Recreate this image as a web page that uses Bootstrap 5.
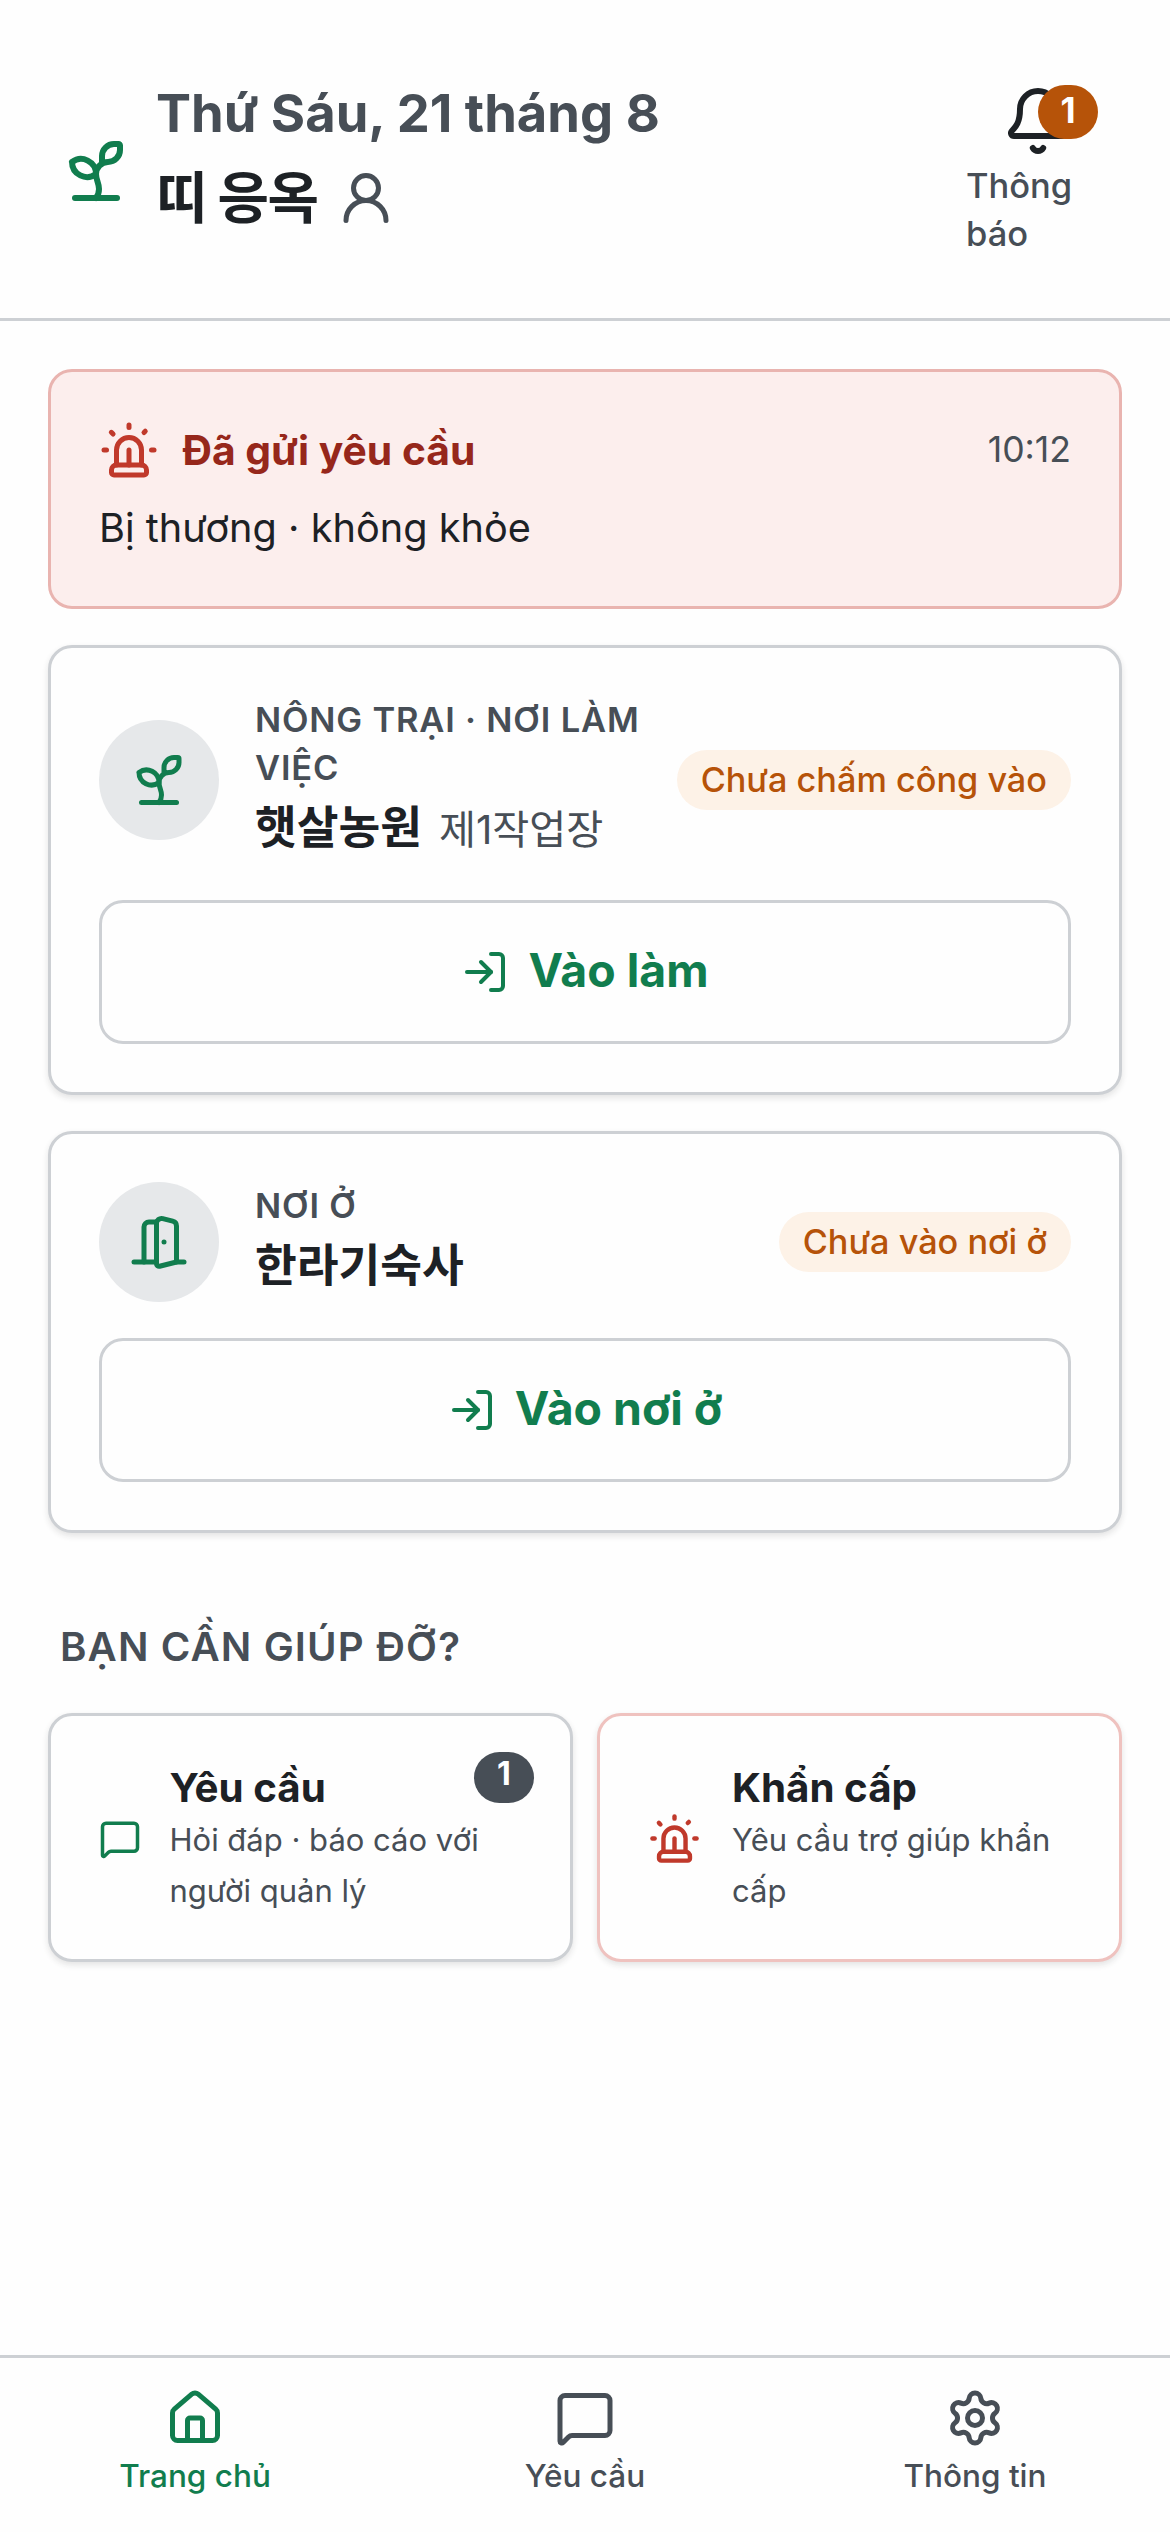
<!DOCTYPE html>
<html lang="vi">
<head>
<meta charset="utf-8">
<meta name="viewport" content="width=device-width, initial-scale=1">
<title>Trang chủ</title>
<link href="https://cdn.jsdelivr.net/npm/bootstrap@5.3.0/dist/css/bootstrap.min.css" rel="stylesheet">
<style>
:root{--ink:#1d2125;--ink-soft:#474e56;--line:#cdd0d4;--green:#117d4e;--amber:#b65309;--red:#c0392b}
body{font-family:Inter,"Noto Sans CJK KR",sans-serif;color:var(--ink);background:#fefefe;line-height:1.5}
.ico{fill:none;stroke:currentColor;stroke-width:2;stroke-linecap:round;stroke-linejoin:round;flex:none;display:block}
.i42{width:42px;height:42px}.i48{width:48px;height:48px}.i53{width:53px;height:53px}.i60{width:60px;height:60px}.i72{width:72px;height:72px}
.c-green{color:var(--green)}.c-soft{color:var(--ink-soft)}.c-red{color:var(--red)}
.screen{min-height:2532px}
.topbar{height:321px;padding:84px 60px 60px;gap:24px;border-bottom:3px solid var(--line)}
.who{padding-bottom:22px}
.today{font-size:52.5px;font-weight:700;line-height:76px}
.person{height:94px;gap:18px}
.person-name{font-size:56px;font-weight:700;line-height:94px;letter-spacing:-1.6px;width:162px;white-space:nowrap}
.bell-btn{width:144px;gap:5px}
.bell-text{font-size:34.5px;font-weight:500;line-height:48px}
.count{min-width:60px;border-radius:27px;color:#fff;font-weight:700;text-align:center}
.count-bell{top:0;right:12px;height:54px;line-height:51px;font-size:35px;background:var(--amber)}
.count-tile{top:36px;right:36px;height:51px;line-height:43px;font-size:32px;background:var(--ink-soft)}
.content{padding:48px 48px 0}
.panel{border:3px solid var(--line);border-radius:24px;padding:48px;background:#fefefe;box-shadow:0 3px 6px rgba(29,33,37,.12)}
.sent{height:240px;margin-bottom:36px;background:#fceeed;border-color:#e9b4b0;box-shadow:none}
.sent-title{font-size:40.8px;font-weight:700;line-height:60px;color:#96271b;margin-left:23.5px}
.sent-time{font-size:35.6px}
.sent-text{font-size:39.7px;line-height:60px;margin-top:18px}
.place{margin-bottom:36px}
.disc{width:120px;height:120px;background:#e6e8ea;flex:none}
.place-text{margin-left:36px;margin-right:24px}
.kicker{font-size:34.5px;font-weight:600;line-height:48px;letter-spacing:.8px}
.place-name{font-size:45.4px;font-weight:700;line-height:72px;height:72px;white-space:nowrap}
.place-sub{font-size:40.2px;line-height:1;margin-left:17px}
.pill{height:60px;line-height:60px;padding:0 24px;font-size:34.25px;font-weight:500;color:var(--amber);background:#fdf2e7;white-space:nowrap}
.action,.action:hover{height:144px;margin-top:36px;border:3px solid var(--line);border-radius:24px;font-size:46.4px;font-weight:700;color:var(--green);gap:19px}
.action-text{padding-bottom:3px}
.help-title{font-size:40.2px;font-weight:600;line-height:60px;letter-spacing:1.1px;margin:84px 0 36px 12px}
.tiles{gap:24px}
.tile{width:525px;height:249px;padding:2px 42px 0 48px}
.tile-red{border-color:#efc2bf}
.tile-text{margin-left:28.5px}
.tile-red .tile-text{margin-left:31px}
.tile-title{font-size:40.3px;font-weight:700;line-height:54px}
.tile-sub{font-size:31px;line-height:51px;margin-top:-1px;margin-bottom:1px}
.tabbar{height:177px;border-top:3px solid var(--line);padding-top:30px}
.tab-item{font-size:31.5px;font-weight:500;line-height:45px;gap:5px}
</style>
</head>
<body>
<svg class="d-none" xmlns="http://www.w3.org/2000/svg">
  <symbol id="sprout" viewBox="0 0 24 24"><path d="M14 9.536V7a4 4 0 0 1 4-4h1.5a.5.5 0 0 1 .5.5V5a4 4 0 0 1-4 4 4 4 0 0 0-4 4c0 2 1 3 1 5a5 5 0 0 1-1 3"/><path d="M4 9a5 5 0 0 1 8 4 5 5 0 0 1-8-4"/><path d="M5 21h14"/></symbol>
  <symbol id="user" viewBox="0 0 24 24"><circle cx="12" cy="8" r="5"/><path d="M20 21a8 8 0 0 0-16 0"/></symbol>
  <symbol id="bell" viewBox="0 0 24 24"><path d="M10.268 21a2 2 0 0 0 3.464 0"/><path d="M3.262 15.326A1 1 0 0 0 4 17h16a1 1 0 0 0 .74-1.673C19.41 13.956 18 12.499 18 8A6 6 0 0 0 6 8c0 4.499-1.411 5.956-2.738 7.326"/></symbol>
  <symbol id="siren" viewBox="0 0 24 24"><path d="M7 18v-6a5 5 0 1 1 10 0v6"/><path d="M5 21a1 1 0 0 0 1 1h12a1 1 0 0 0 1-1v-1a2 2 0 0 0-2-2H7a2 2 0 0 0-2 2z"/><path d="M21 12h1"/><path d="M18.5 4.5 18 5"/><path d="M2 12h1"/><path d="M12 2v1"/><path d="m4.929 4.929.707.707"/><path d="M12 12v6"/></symbol>
  <symbol id="door" viewBox="0 0 24 24"><path d="M11 20H2"/><path d="M11 4.562v16.157a1 1 0 0 0 1.242.97L19 20V5.562a2 2 0 0 0-1.515-1.94l-4-1A2 2 0 0 0 11 4.561z"/><path d="M11 4H8a2 2 0 0 0-2 2v14"/><path d="M14 12h.01"/><path d="M22 20h-3"/></symbol>
  <symbol id="enter" viewBox="0 0 24 24"><path d="m10 17 5-5-5-5"/><path d="M15 12H3"/><path d="M15 3h4a2 2 0 0 1 2 2v14a2 2 0 0 1-2 2h-4"/></symbol>
  <symbol id="message" viewBox="0 0 24 24"><path d="M22 17a2 2 0 0 1-2 2H6.828a2 2 0 0 0-1.414.586l-2.202 2.202A.71.71 0 0 1 2 21.286V5a2 2 0 0 1 2-2h16a2 2 0 0 1 2 2z"/></symbol>
  <symbol id="house" viewBox="0 0 24 24"><path d="M15 21v-8a1 1 0 0 0-1-1h-4a1 1 0 0 0-1 1v8"/><path d="M3 10a2 2 0 0 1 .709-1.528l7-5.999a2 2 0 0 1 2.582 0l7 5.999A2 2 0 0 1 21 10v9a2 2 0 0 1-2 2H5a2 2 0 0 1-2-2z"/></symbol>
  <symbol id="gear" viewBox="0 0 24 24"><path d="M9.671 4.136a2.34 2.34 0 0 1 4.659 0 2.34 2.34 0 0 0 3.319 1.915 2.34 2.34 0 0 1 2.33 4.033 2.34 2.34 0 0 0 0 3.831 2.34 2.34 0 0 1-2.33 4.033 2.34 2.34 0 0 0-3.319 1.915 2.34 2.34 0 0 1-4.659 0 2.34 2.34 0 0 0-3.32-1.915 2.34 2.34 0 0 1-2.33-4.033 2.34 2.34 0 0 0 0-3.831A2.34 2.34 0 0 1 6.35 6.051a2.34 2.34 0 0 0 3.319-1.915"/><circle cx="12" cy="12" r="3"/></symbol>
</svg>

<div class="screen d-flex flex-column">
  <header class="topbar d-flex align-items-center">
    <svg class="ico i72 c-green"><use href="#sprout"/></svg>
    <div class="who">
      <div class="today c-soft">Thứ Sáu, 21 tháng 8</div>
      <div class="person d-flex align-items-center">
        <span class="person-name">띠 응옥</span>
        <svg class="ico i60 c-soft"><use href="#user"/></svg>
      </div>
    </div>
    <div class="bell-btn ms-auto position-relative d-flex flex-column align-items-center">
      <svg class="ico i72"><use href="#bell"/></svg>
      <span class="bell-text c-soft w-100">Thông báo</span>
      <span class="count count-bell position-absolute">1</span>
    </div>
  </header>

  <main class="content flex-grow-1">
    <section class="panel sent">
      <div class="d-flex align-items-center">
        <svg class="ico i60 c-red"><use href="#siren"/></svg>
        <span class="sent-title">Đã gửi yêu cầu</span>
        <span class="sent-time c-soft ms-auto">10:12</span>
      </div>
      <div class="sent-text">Bị thương · không khỏe</div>
    </section>

    <section class="panel place">
      <div class="d-flex align-items-center">
        <div class="disc rounded-circle d-flex align-items-center justify-content-center c-green"><svg class="ico i60"><use href="#sprout"/></svg></div>
        <div class="place-text flex-grow-1">
          <div class="kicker c-soft">NÔNG TRẠI · NƠI LÀM VIỆC</div>
          <div class="place-name">햇살농원<span class="place-sub c-soft fw-normal">제1작업장</span></div>
        </div>
        <span class="pill rounded-pill">Chưa chấm công vào</span>
      </div>
      <button class="action btn w-100 d-flex align-items-center justify-content-center"><svg class="ico i48"><use href="#enter"/></svg><span class="action-text">Vào làm</span></button>
    </section>

    <section class="panel place mb-0">
      <div class="d-flex align-items-center">
        <div class="disc rounded-circle d-flex align-items-center justify-content-center c-green"><svg class="ico i60"><use href="#door"/></svg></div>
        <div class="place-text flex-grow-1">
          <div class="kicker c-soft">NƠI Ở</div>
          <div class="place-name">한라기숙사</div>
        </div>
        <span class="pill rounded-pill">Chưa vào nơi ở</span>
      </div>
      <button class="action btn w-100 d-flex align-items-center justify-content-center"><svg class="ico i48"><use href="#enter"/></svg><span class="action-text">Vào nơi ở</span></button>
    </section>

    <h2 class="help-title c-soft">BẠN CẦN GIÚP ĐỠ?</h2>
    <div class="tiles d-flex">
      <div class="panel tile position-relative d-flex align-items-center">
        <svg class="ico i42 c-green"><use href="#message"/></svg>
        <div class="tile-text">
          <div class="tile-title">Yêu cầu</div>
          <div class="tile-sub c-soft">Hỏi đáp · báo cáo với người quản lý</div>
        </div>
        <span class="count count-tile position-absolute">1</span>
      </div>
      <div class="panel tile tile-red d-flex align-items-center">
        <svg class="ico i53 c-red"><use href="#siren"/></svg>
        <div class="tile-text">
          <div class="tile-title">Khẩn cấp</div>
          <div class="tile-sub c-soft">Yêu cầu trợ giúp khẩn cấp</div>
        </div>
      </div>
    </div>
  </main>

  <nav class="tabbar row g-0">
    <div class="tab-item col d-flex flex-column align-items-center c-green"><svg class="ico i60"><use href="#house"/></svg>Trang chủ</div>
    <div class="tab-item col d-flex flex-column align-items-center c-soft"><svg class="ico i60"><use href="#message"/></svg>Yêu cầu</div>
    <div class="tab-item col d-flex flex-column align-items-center c-soft"><svg class="ico i60"><use href="#gear"/></svg>Thông tin</div>
  </nav>
</div>
<script src="https://cdn.jsdelivr.net/npm/bootstrap@5.3.0/dist/js/bootstrap.bundle.min.js"></script>
</body>
</html>
